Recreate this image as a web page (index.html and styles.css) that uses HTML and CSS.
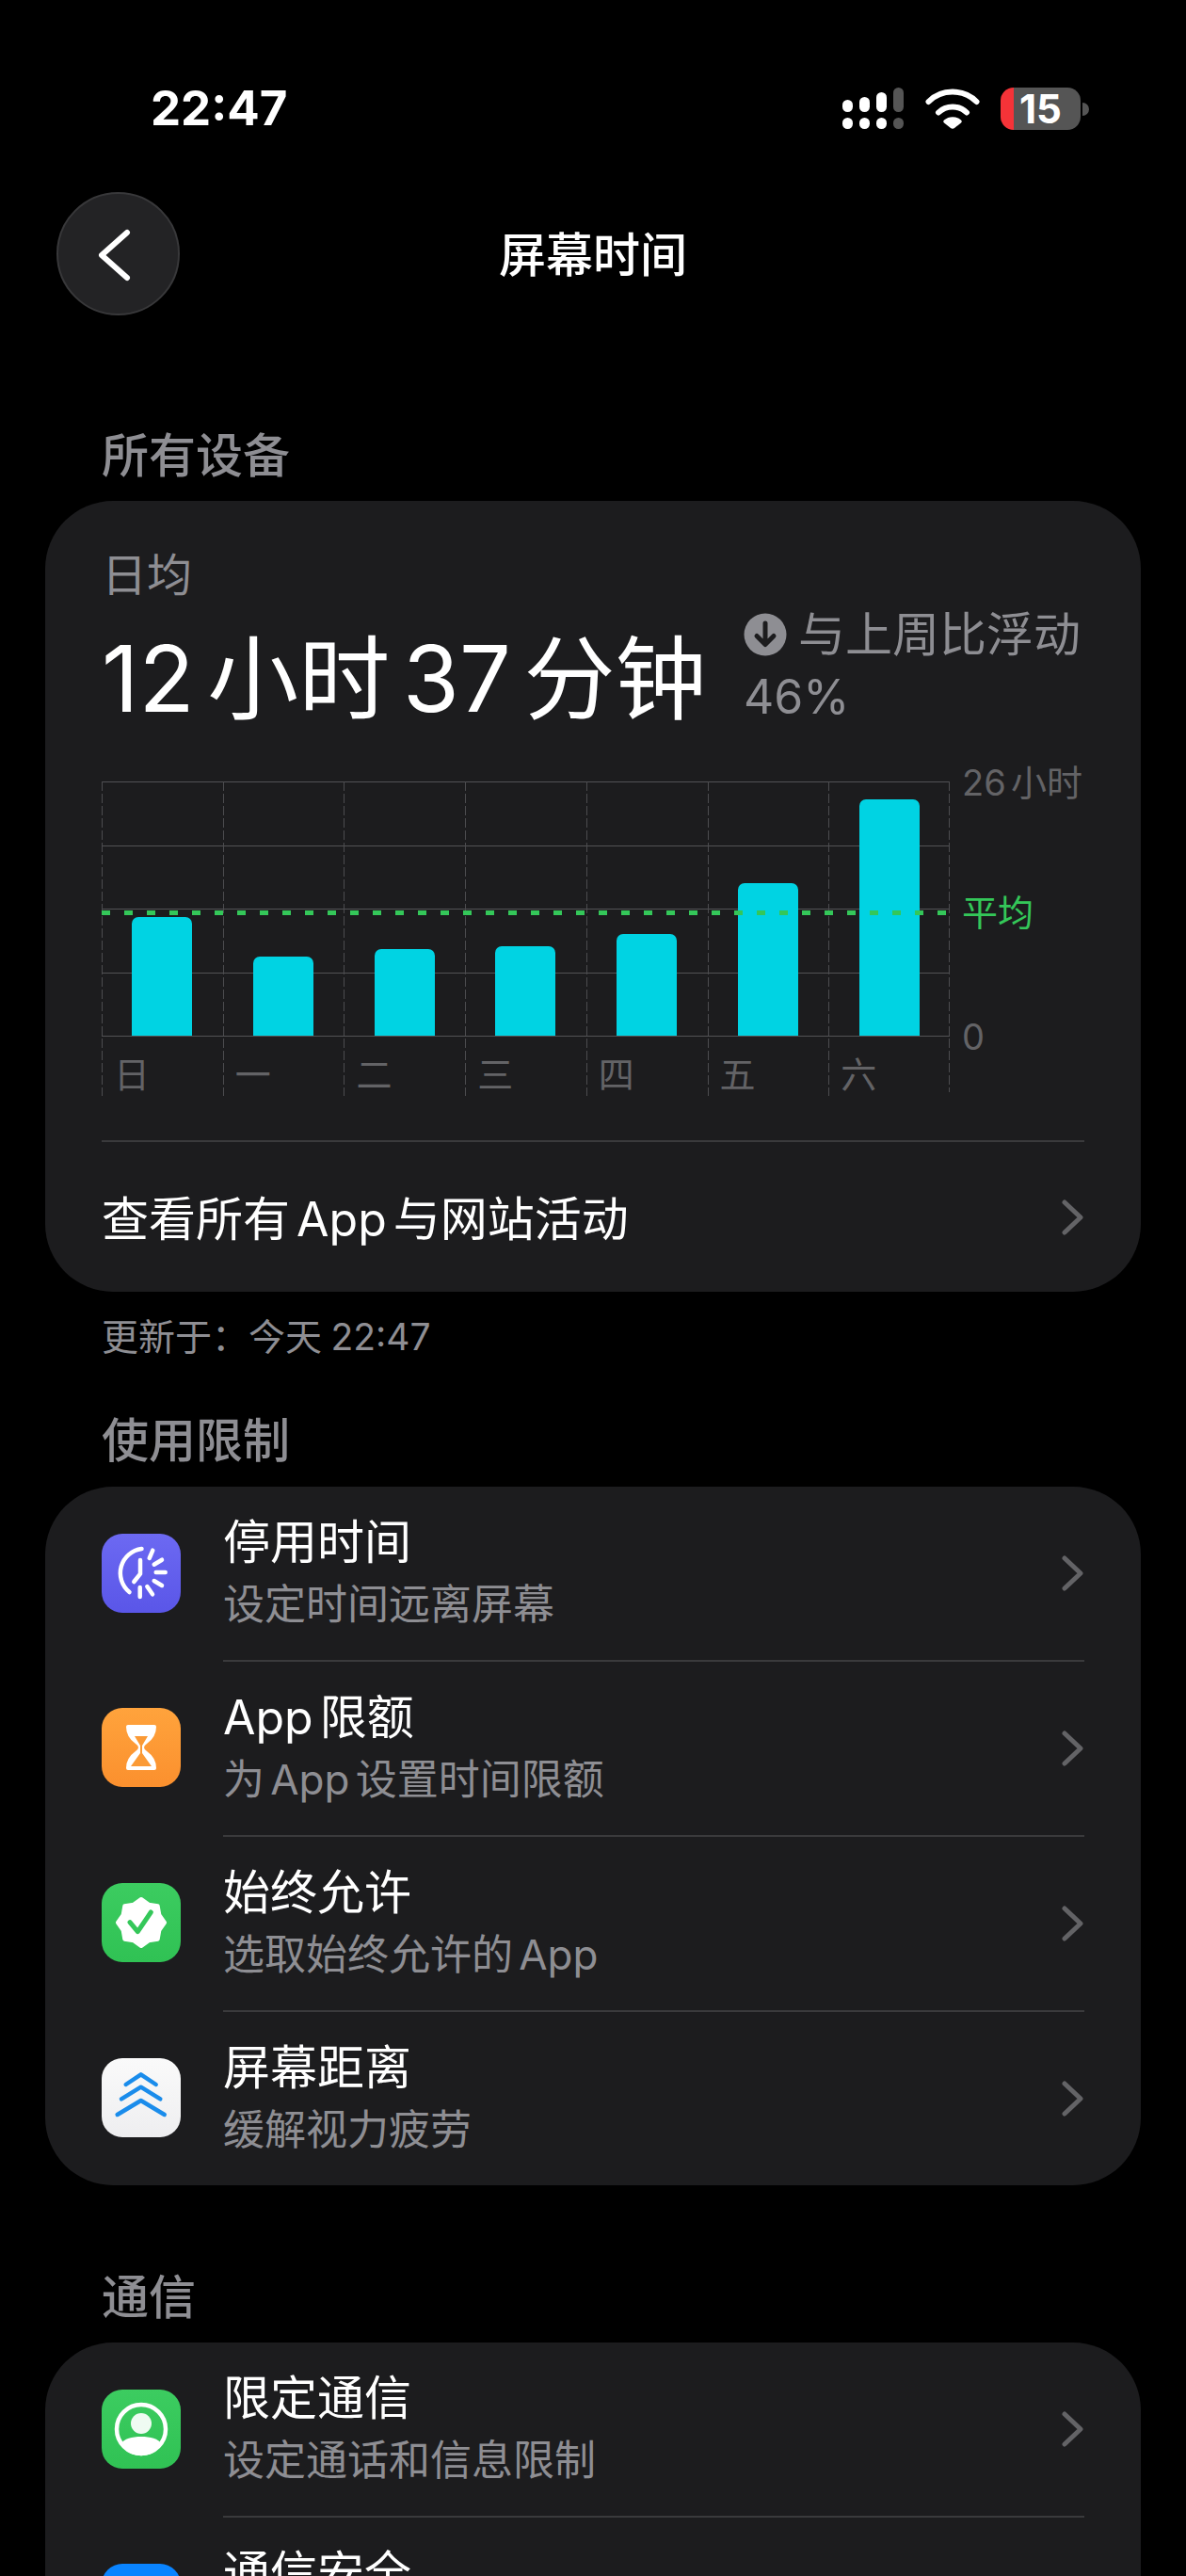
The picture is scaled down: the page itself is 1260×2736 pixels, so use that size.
FILE: index.html
```html
<!DOCTYPE html>
<html>
<head>
	<title>屏幕时间</title>
	<meta charset="utf-8">
	<link rel="stylesheet" href="styles.css">
</head>
<body>
	<div class="status">
		<span class="clock">22:47</span>
		<div class="status-icons">
			<svg class="signal" width="66" height="45" viewBox="0 0 66 45">
				<g fill="#fff">
					<rect x="0" y="13" width="11" height="13" rx="5.5"/>
					<rect x="18" y="10" width="11" height="16" rx="5.5"/>
					<rect x="36" y="5" width="11" height="21" rx="5.5"/>
					<rect x="0" y="32" width="11" height="12" rx="5.5"/>
					<rect x="18" y="32" width="11" height="12" rx="5.5"/>
					<rect x="36" y="32" width="11" height="12" rx="5.5"/>
				</g>
				<g fill="#555">
					<rect x="54" y="0" width="11" height="26" rx="5.5"/>
					<rect x="54" y="32" width="11" height="12" rx="5.5"/>
				</g>
			</svg>
			<svg class="wifi" width="58" height="43" viewBox="0 0 58 43">
				<g fill="none" stroke="#fff" stroke-width="6" stroke-linecap="round">
					<path d="M3.5 14C17 0 41 0 54.5 14"/>
					<path d="M14 25.5C22 17.5 36 17.5 44 25.5"/>
				</g>
				<path d="M20 33.5C25 29 33 29 38 33.5C39 34.5 39 35.5 38 36.5L31 42C30 43 28 43 27 42L20 36.5C19 35.5 19 34.5 20 33.5Z" fill="#fff"/>
			</svg>
			<div class="battery"><span class="battery-level">15</span><i class="battery-nub"></i></div>
		</div>
	</div>

	<div class="nav">
		<div class="back">
			<svg width="44" height="66" viewBox="0 0 44 66"><path d="M33 10L6 34L33 58" fill="none" stroke="#fff" stroke-width="6" stroke-linecap="round" stroke-linejoin="round"/></svg>
		</div>
		<div class="nav-title">屏幕时间</div>
	</div>

	<div class="section-title first">所有设备</div>
	<div class="card">
		<div class="summary">
			<div class="summary-label">日均</div>
			<div class="summary-main">
				<div class="summary-value">12 小时 37 分钟</div>
				<div class="summary-trend">
					<div class="trend-line">
						<svg width="46" height="46" viewBox="0 0 46 46">
							<circle cx="23" cy="23" r="22.5" fill="#8e8e93"/>
							<path d="M23 11V33M14 24.5L23 33.5L32 24.5" fill="none" stroke="#1c1c1e" stroke-width="5" stroke-linecap="round" stroke-linejoin="round"/>
						</svg>
						<span>与上周比浮动</span>
					</div>
					<div class="trend-line">46%</div>
				</div>
			</div>

			<div class="chart">
				<div class="plot">
					<div class="hlines"><i></i><i></i><i></i><i></i><i></i></div>
					<div class="days">
						<div class="day"><div class="bar-slot"><div class="bar" style="height:126px"></div></div><span class="day-name">日</span></div>
						<div class="day"><div class="bar-slot"><div class="bar" style="height:84px"></div></div><span class="day-name">一</span></div>
						<div class="day"><div class="bar-slot"><div class="bar" style="height:92px"></div></div><span class="day-name">二</span></div>
						<div class="day"><div class="bar-slot"><div class="bar" style="height:95px"></div></div><span class="day-name">三</span></div>
						<div class="day"><div class="bar-slot"><div class="bar" style="height:108px"></div></div><span class="day-name">四</span></div>
						<div class="day"><div class="bar-slot"><div class="bar" style="height:162px"></div></div><span class="day-name">五</span></div>
						<div class="day"><div class="bar-slot"><div class="bar" style="height:251px"></div></div><span class="day-name">六</span></div>
					</div>
					<div class="avg-line"></div>
				</div>
				<div class="yaxis">
					<span>26 小时</span>
					<span class="yaxis-avg">平均</span>
					<span>0</span>
				</div>
			</div>
		</div>
		<div class="link-row">
			<span>查看所有 App 与网站活动</span>
			<svg class="chevron" width="24" height="38" viewBox="0 0 24 38"><path d="M3 3L20 19L3 35" fill="none" stroke="#636366" stroke-width="5" stroke-linecap="round" stroke-linejoin="round"/></svg>
		</div>
	</div>
	<div class="footnote">更新于：今天 22:47</div>

	<div class="section-title second">使用限制</div>
	<div class="card">
		<div class="row">
			<svg class="app-icon" width="84" height="84" viewBox="0 0 84 84">
				<defs><linearGradient id="purple" x1="0" y1="0" x2="0" y2="1"><stop offset="0" stop-color="#6c69f2"/><stop offset="1" stop-color="#5a56e8"/></linearGradient></defs>
				<rect width="84" height="84" rx="22" fill="url(#purple)"/>
				<g fill="none" stroke="#fff" stroke-width="4.5" stroke-linecap="round" stroke-linejoin="round">
					<path d="M42.5 16A26 26 0 0 0 29.5 62"/>
					<path d="M41 28V42.7L34.3 51"/>
					<path d="M50.7 26L54.3 17.7M55.7 32.7L64 27.7M57.7 41H67.7M55.7 50L64 55M48.3 56L54 64.3M40.7 57V67"/>
				</g>
			</svg>
			<div class="row-body">
				<div class="row-text">
					<div class="row-title">停用时间</div>
					<div class="row-sub">设定时间远离屏幕</div>
				</div>
				<svg class="chevron" width="24" height="38" viewBox="0 0 24 38"><path d="M3 3L20 19L3 35" fill="none" stroke="#636366" stroke-width="5" stroke-linecap="round" stroke-linejoin="round"/></svg>
			</div>
		</div>
		<div class="row">
			<svg class="app-icon" width="84" height="84" viewBox="0 0 84 84">
				<defs><linearGradient id="orange" x1="0" y1="0" x2="0" y2="1"><stop offset="0" stop-color="#ffa33c"/><stop offset="1" stop-color="#fb902e"/></linearGradient></defs>
				<rect width="84" height="84" rx="22" fill="url(#orange)"/>
				<path d="M28 18H56Q58 18 58 20Q58 31 48 38Q45 40 45 42Q45 44 48 46Q58 53 58 64Q58 66 56 66H28Q26 66 26 64Q26 53 36 46Q39 44 39 42Q39 40 36 38Q26 31 26 20Q26 18 28 18Z" fill="#fff"/>
				<path d="M35 30H49L43 40V48L53 62H31L41 48V40Z" fill="#fb9a35"/>
			</svg>
			<div class="row-body">
				<div class="row-text">
					<div class="row-title">App 限额</div>
					<div class="row-sub">为 App 设置时间限额</div>
				</div>
				<svg class="chevron" width="24" height="38" viewBox="0 0 24 38"><path d="M3 3L20 19L3 35" fill="none" stroke="#636366" stroke-width="5" stroke-linecap="round" stroke-linejoin="round"/></svg>
			</div>
		</div>
		<div class="row">
			<svg class="app-icon" width="84" height="84" viewBox="0 0 84 84">
				<defs><linearGradient id="green" x1="0" y1="0" x2="0" y2="1"><stop offset="0" stop-color="#3ccc60"/><stop offset="1" stop-color="#30c254"/></linearGradient></defs>
				<rect width="84" height="84" rx="22" fill="url(#green)"/>
				<polygon points="42,17 50,22.6 59.7,24.3 61.4,34 67,42 61.4,50 59.7,59.7 50,61.4 42,67 34,61.4 24.3,59.7 22.6,50 17,42 22.6,34 24.3,24.3 34,22.6" fill="#fff" stroke="#fff" stroke-width="4" stroke-linejoin="round"/>
				<path d="M30 41.7L38.3 51.7L52.3 31" fill="none" stroke="#34c759" stroke-width="5" stroke-linecap="round" stroke-linejoin="round"/>
			</svg>
			<div class="row-body">
				<div class="row-text">
					<div class="row-title">始终允许</div>
					<div class="row-sub">选取始终允许的 App</div>
				</div>
				<svg class="chevron" width="24" height="38" viewBox="0 0 24 38"><path d="M3 3L20 19L3 35" fill="none" stroke="#636366" stroke-width="5" stroke-linecap="round" stroke-linejoin="round"/></svg>
			</div>
		</div>
		<div class="row">
			<svg class="app-icon" width="84" height="84" viewBox="0 0 84 84">
				<defs><linearGradient id="paper" x1="0" y1="0" x2="0" y2="1"><stop offset="0" stop-color="#fafafa"/><stop offset="1" stop-color="#eeeef0"/></linearGradient></defs>
				<rect width="84" height="84" rx="22" fill="url(#paper)"/>
				<path d="M25.7 28L41.7 17.3L57.7 28M21 43.3L41.7 30.7L62.3 43.3M16.7 60L41.7 45L66.7 60" fill="none" stroke="#1a8ceb" stroke-width="4.5" stroke-linecap="round" stroke-linejoin="round"/>
			</svg>
			<div class="row-body">
				<div class="row-text">
					<div class="row-title">屏幕距离</div>
					<div class="row-sub">缓解视力疲劳</div>
				</div>
				<svg class="chevron" width="24" height="38" viewBox="0 0 24 38"><path d="M3 3L20 19L3 35" fill="none" stroke="#636366" stroke-width="5" stroke-linecap="round" stroke-linejoin="round"/></svg>
			</div>
		</div>
	</div>

	<div class="section-title third">通信</div>
	<div class="card">
		<div class="row">
			<svg class="app-icon" width="84" height="84" viewBox="0 0 84 84">
				<rect width="84" height="84" rx="22" fill="url(#green)"/>
				<circle cx="42" cy="42" r="26" fill="none" stroke="#fff" stroke-width="4.5"/>
				<circle cx="42" cy="36" r="11" fill="#fff" opacity=".92"/>
				<path d="M20 58C24 52 32 50 42 50C52 50 60 52 64 58A26 26 0 0 1 20 58Z" fill="#fff"/>
			</svg>
			<div class="row-body">
				<div class="row-text">
					<div class="row-title">限定通信</div>
					<div class="row-sub">设定通话和信息限制</div>
				</div>
				<svg class="chevron" width="24" height="38" viewBox="0 0 24 38"><path d="M3 3L20 19L3 35" fill="none" stroke="#636366" stroke-width="5" stroke-linecap="round" stroke-linejoin="round"/></svg>
			</div>
		</div>
		<div class="row">
			<div class="blue-icon"></div>
			<div class="row-body">
				<div class="row-text">
					<div class="row-title">通信安全</div>
					<div class="row-sub">&nbsp;</div>
				</div>
			</div>
		</div>
	</div>
</body>
</html>
```

FILE: styles.css
```css
* {
	box-sizing: border-box;
	word-spacing: -0.14em;
}
html, body {
	margin: 0;
	padding: 0;
}
body {
	width: 1260px;
	height: 2736px;
	overflow: hidden;
	background-color: #000;
	color: #fff;
	font-family: Inter, "Noto Sans CJK SC", sans-serif;
}

/* status bar */
.status {
	display: flex;
	justify-content: space-between;
	align-items: center;
	height: 50px;
	margin-top: 90px;
	padding: 0 112px 0 160px;
}
.clock {
	font-size: 51px;
	font-weight: 700;
	line-height: 50px;
}
.status-icons {
	display: flex;
	align-items: center;
	gap: 22px;
}
.battery {
	position: relative;
	width: 85px;
	height: 45px;
	border-radius: 14px;
	background: linear-gradient(to right, #f53338 14px, #555 14px);
	font-size: 42px;
	font-weight: 700;
	line-height: 45px;
	text-align: center;
}
.battery-nub {
	position: absolute;
	top: 16px;
	left: 87px;
	width: 7px;
	height: 14px;
	border-radius: 0 7px 7px 0;
	background-color: #555;
}

/* nav */
.nav {
	position: relative;
	display: flex;
	justify-content: center;
	align-items: center;
	height: 131px;
	margin-top: 64px;
}
.back {
	position: absolute;
	left: 60px;
	top: 0;
	display: flex;
	align-items: center;
	justify-content: center;
	width: 131px;
	height: 131px;
	border-radius: 50%;
	background-color: #232325;
	border: 2px solid #38383a;
	padding-right: 3px;
}
.nav-title {
	font-size: 50px;
	font-weight: 500;
	line-height: 60px;
	margin-top: 2px;
}

/* sections */
.section-title {
	padding-left: 108px;
	font-size: 50px;
	font-weight: 500;
	line-height: 60px;
	color: #8e8e93;
	margin-bottom: 18px;
}
.section-title.first {
	margin-top: 119px;
}
.section-title.second {
	margin-top: 56px;
	margin-bottom: 19px;
}
.section-title.third {
	margin-top: 89px;
}
.card {
	margin: 0 48px;
	background-color: #1c1c1e;
	border-radius: 72px;
}

/* summary */
.summary {
	padding: 49px 60px 51px;
}
.summary-label {
	font-size: 48px;
	line-height: 60px;
	color: #8e8e93;
}
.summary-main {
	display: flex;
	justify-content: space-between;
	height: 189px;
}
.summary-value {
	font-size: 97px;
	line-height: 130px;
	margin-top: 15px;
	white-space: nowrap;
}
.summary-trend {
	width: 362px;
	font-size: 50px;
	line-height: 66px;
	color: #8e8e93;
}
.trend-line {
	display: flex;
	align-items: center;
	gap: 12px;
	height: 66px;
}

/* chart */
.chart {
	display: flex;
	gap: 13px;
}
.plot {
	position: relative;
	flex-shrink: 0;
	width: 901px;
	height: 330px;
}
.hlines {
	position: absolute;
	left: 0;
	right: 0;
	top: 0;
	height: 271px;
	display: flex;
	flex-direction: column;
	justify-content: space-between;
}
.hlines i {
	display: block;
	height: 1px;
	background-color: #525255;
}
.days {
	position: relative;
	display: grid;
	grid-template-columns: repeat(7, 1fr);
	height: 330px;
	background: repeating-linear-gradient(to bottom, #4c4c4f 0 10px, transparent 10px 13px) right top / 1px 100% no-repeat;
}
.day {
	padding-left: 1px;
	background: repeating-linear-gradient(to bottom, #4c4c4f 0 10px, transparent 10px 13px) left top / 1px 100% no-repeat;
}
.bar-slot {
	display: flex;
	align-items: flex-end;
	justify-content: center;
	height: 270px;
	padding-right: 1px;
}
.bar {
	width: 64px;
	background-color: #00d3e3;
	border-radius: 7px 7px 0 0;
}
.day-name {
	display: block;
	width: 38px;
	margin: 18px 0 0 12px;
	font-size: 38px;
	line-height: 46px;
	color: #636366;
}
.avg-line {
	position: absolute;
	left: 0;
	right: 0;
	top: 137px;
	height: 5px;
	background: repeating-linear-gradient(to right, #34c759 0 9px, transparent 9px 24px);
}
.yaxis {
	display: flex;
	flex-direction: column;
	justify-content: space-between;
	height: 310px;
	margin-top: -19px;
	font-size: 38px;
	line-height: 40px;
	color: #636366;
	white-space: nowrap;
}
.yaxis-avg {
	color: #34c759;
	margin-top: 6px;
}

/* rows */
.link-row {
	display: flex;
	justify-content: space-between;
	align-items: center;
	height: 161px;
	margin: 0 60px;
	border-top: 2px solid #3a3a3c;
	font-size: 50px;
}
.link-row span {
	margin-bottom: 4px;
}
.footnote {
	margin-top: 24px;
	padding-left: 108px;
	font-size: 39px;
	line-height: 48px;
	color: #8e8e93;
	word-spacing: -0.04em;
}
.row {
	display: flex;
	align-items: center;
	gap: 45px;
	height: 186px;
	padding: 0 60px;
}
.row:first-child {
	height: 184px;
}
.app-icon {
	flex-shrink: 0;
}
.blue-icon {
	flex-shrink: 0;
	width: 84px;
	height: 84px;
	border-radius: 22px;
	background-color: #0a84ff;
}
.row-body {
	flex: 1;
	display: flex;
	justify-content: space-between;
	align-items: center;
	height: 100%;
}
.row + .row .row-body {
	border-top: 2px solid #3a3a3c;
}
.row-title {
	font-size: 50px;
	line-height: 66px;
}
.row-sub {
	font-size: 44px;
	line-height: 66px;
	color: #8e8e93;
}
```
